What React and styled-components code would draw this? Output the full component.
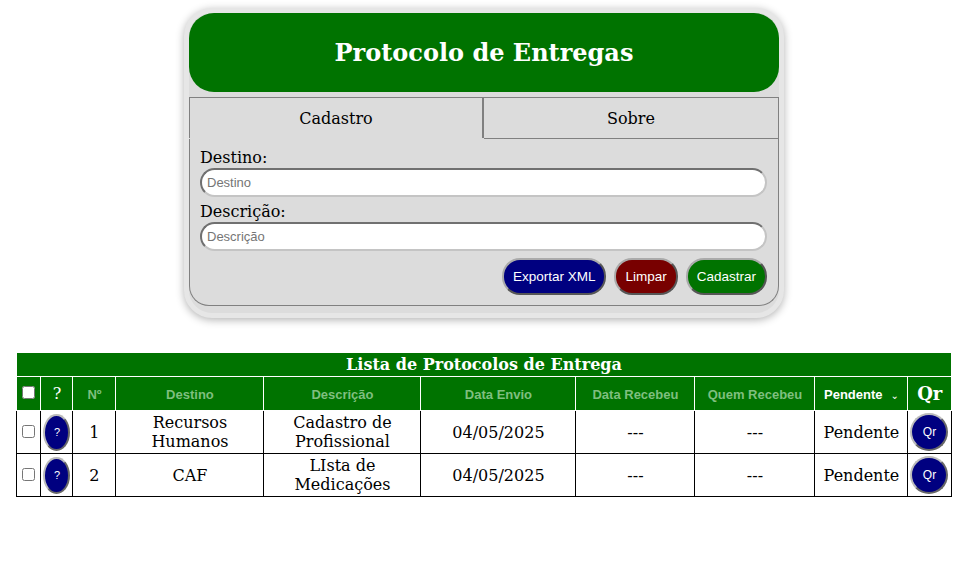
import styled, { createGlobalStyle } from 'styled-components';

const GlobalStyle = createGlobalStyle`
  body {
    margin: 0;
    background: #ffffff;
    font-family: "DejaVu Serif", serif;
    font-size: 16px;
    color: #000;
  }
`;

const GREEN = '#007300';
const NAVY = '#000080';
const MAROON = '#780000';
const SANS = '"Liberation Sans", "DejaVu Sans", sans-serif';

const Page = styled.div`
  width: 968px;
  padding-top: 8px;
  display: flex;
  flex-direction: column;
  align-items: center;
`;

const Card = styled.div`
  width: 600px;
  box-sizing: border-box;
  background: #dcdcdc;
  border: 5px solid #e6e6e6;
  border-radius: 28px;
  box-shadow: 0 2px 8px rgba(0, 0, 0, 0.3);
  padding: 0 0 7px 0;
`;

const Header = styled.div`
  height: 79px;
  background: ${GREEN};
  border-radius: 25px;
  display: flex;
  align-items: center;
  justify-content: center;
  color: #fff;
  font-size: 24px;
  font-weight: bold;
`;

const Tabs = styled.div`
  margin-top: 5px;
  display: grid;
  grid-template-columns: 1fr 1fr;
`;

const Tab = styled.div`
  height: 40px;
  display: flex;
  align-items: center;
  justify-content: center;
  border: 1px solid #808080;
  border-bottom: ${p => (p.$active ? 'none' : '1px solid #808080')};
  border-left: ${p => (p.$active ? '1px solid #808080' : 'none')};
  border-right: ${p => (p.$active ? '2px solid #808080' : '1px solid #808080')};
  font-size: 16px;
`;

const Panel = styled.div`
  border: 1px solid #808080;
  border-top: none;
  border-radius: 0 0 20px 20px;
  padding: 9px 11px 10px 10px;
  display: flex;
  flex-direction: column;
`;

const Label = styled.label`
  font-size: 16px;
  line-height: 19px;
`;

const Input = styled.input`
  margin: 1px 0 5px;
  height: 29px;
  box-sizing: border-box;
  border: 2px inset #c4c4c4;
  border-radius: 15px;
  padding: 0 5px;
  background: #fff;
  font-family: ${SANS};
  font-size: 13px;
  &::placeholder {
    color: #757575;
  }
`;

const Actions = styled.div`
  margin-top: 2px;
  display: flex;
  justify-content: flex-end;
  gap: 8px;
`;

const Button = styled.button`
  height: 37px;
  padding: 0 9px;
  border: 2px outset #aaa;
  border-radius: 18px;
  background: ${p => p.$color};
  color: #fff;
  font-family: ${SANS};
  font-size: 13.5px;
  cursor: pointer;
`;

const Table = styled.table`
  margin-top: 34px;
  width: 934px;
  border-collapse: collapse;
  table-layout: fixed;
`;

const TitleCell = styled.th`
  background: ${GREEN};
  color: #fff;
  font-size: 16px;
  font-weight: bold;
  height: 23px;
  padding: 0;
  border: 1px solid #fff;
  border-left: none;
  border-right: none;
`;

const HeadCell = styled.th`
  background: ${GREEN};
  color: #fff;
  height: 33px;
  padding: 0;
  border: 1px solid #fff;
  font-weight: ${p => (p.$bold ? 'bold' : 'normal')};
  font-size: ${p => (p.$bold ? '18px' : '16px')};
  &:first-child {
    border-left: none;
  }
  &:last-child {
    border-right: none;
  }
`;

const SortButton = styled.button`
  background: transparent;
  border: none;
  padding: 0 4px;
  color: ${p => (p.$active ? '#fff' : '#7fbf7f')};
  font-family: ${SANS};
  font-size: 13px;
  font-weight: bold;
  cursor: pointer;
`;

const Chevron = styled.span`
  margin-left: 8px;
  font-size: 10px;
  font-weight: normal;
`;

const Cell = styled.td`
  border: 1px solid #000;
  text-align: center;
  padding: 1px;
  height: 40px;
  font-size: 16px;
  line-height: 19px;
`;

const HelpButton = styled.button`
  width: 27px;
  height: 37px;
  padding: 0;
  border: 2px outset #bbb;
  border-radius: 50%;
  background: ${NAVY};
  color: #fff;
  font-family: ${SANS};
  font-size: 11px;
`;

const QrButton = styled.button`
  width: 38px;
  height: 38px;
  padding: 0;
  border: 2px outset #bbb;
  border-radius: 50%;
  background: ${NAVY};
  color: #fff;
  font-family: ${SANS};
  font-size: 12px;
`;

const Check = styled.input`
  margin: 0;
  width: 13px;
  height: 13px;
`;

const columns = [24, 32, 43, 148, 157, 155, 119, 120, 93, 43];

const rows = [
  { n: 1, destino: 'Recursos Humanos', descricao: 'Cadastro de Profissional' },
  { n: 2, destino: 'CAF', descricao: 'LIsta de Medicações' },
];

export default function App() {
  return (
    <>
      <GlobalStyle />
      <Page>
        <Card>
          <Header>Protocolo de Entregas</Header>
          <Tabs>
            <Tab $active>Cadastro</Tab>
            <Tab>Sobre</Tab>
          </Tabs>
          <Panel>
            <Label>Destino:</Label>
            <Input placeholder="Destino" />
            <Label>Descrição:</Label>
            <Input placeholder="Descrição" />
            <Actions>
              <Button $color={NAVY}>Exportar XML</Button>
              <Button $color={MAROON}>Limpar</Button>
              <Button $color={GREEN}>Cadastrar</Button>
            </Actions>
          </Panel>
        </Card>

        <Table>
          <colgroup>
            {columns.map((w, i) => (
              <col key={i} style={{ width: w }} />
            ))}
          </colgroup>
          <thead>
            <tr>
              <TitleCell colSpan={10}>Lista de Protocolos de Entrega</TitleCell>
            </tr>
            <tr>
              <HeadCell><Check type="checkbox" /></HeadCell>
              <HeadCell>?</HeadCell>
              <HeadCell><SortButton>Nº</SortButton></HeadCell>
              <HeadCell><SortButton>Destino</SortButton></HeadCell>
              <HeadCell><SortButton>Descrição</SortButton></HeadCell>
              <HeadCell><SortButton>Data Envio</SortButton></HeadCell>
              <HeadCell><SortButton>Data Recebeu</SortButton></HeadCell>
              <HeadCell><SortButton>Quem Recebeu</SortButton></HeadCell>
              <HeadCell><SortButton $active>Pendente<Chevron>⌄</Chevron></SortButton></HeadCell>
              <HeadCell $bold>Qr</HeadCell>
            </tr>
          </thead>
          <tbody>
            {rows.map(r => (
              <tr key={r.n}>
                <Cell><Check type="checkbox" /></Cell>
                <Cell><HelpButton>?</HelpButton></Cell>
                <Cell>{r.n}</Cell>
                <Cell>{r.destino}</Cell>
                <Cell>{r.descricao}</Cell>
                <Cell>04/05/2025</Cell>
                <Cell>---</Cell>
                <Cell>---</Cell>
                <Cell>Pendente</Cell>
                <Cell><QrButton>Qr</QrButton></Cell>
              </tr>
            ))}
          </tbody>
        </Table>
      </Page>
    </>
  );
}
